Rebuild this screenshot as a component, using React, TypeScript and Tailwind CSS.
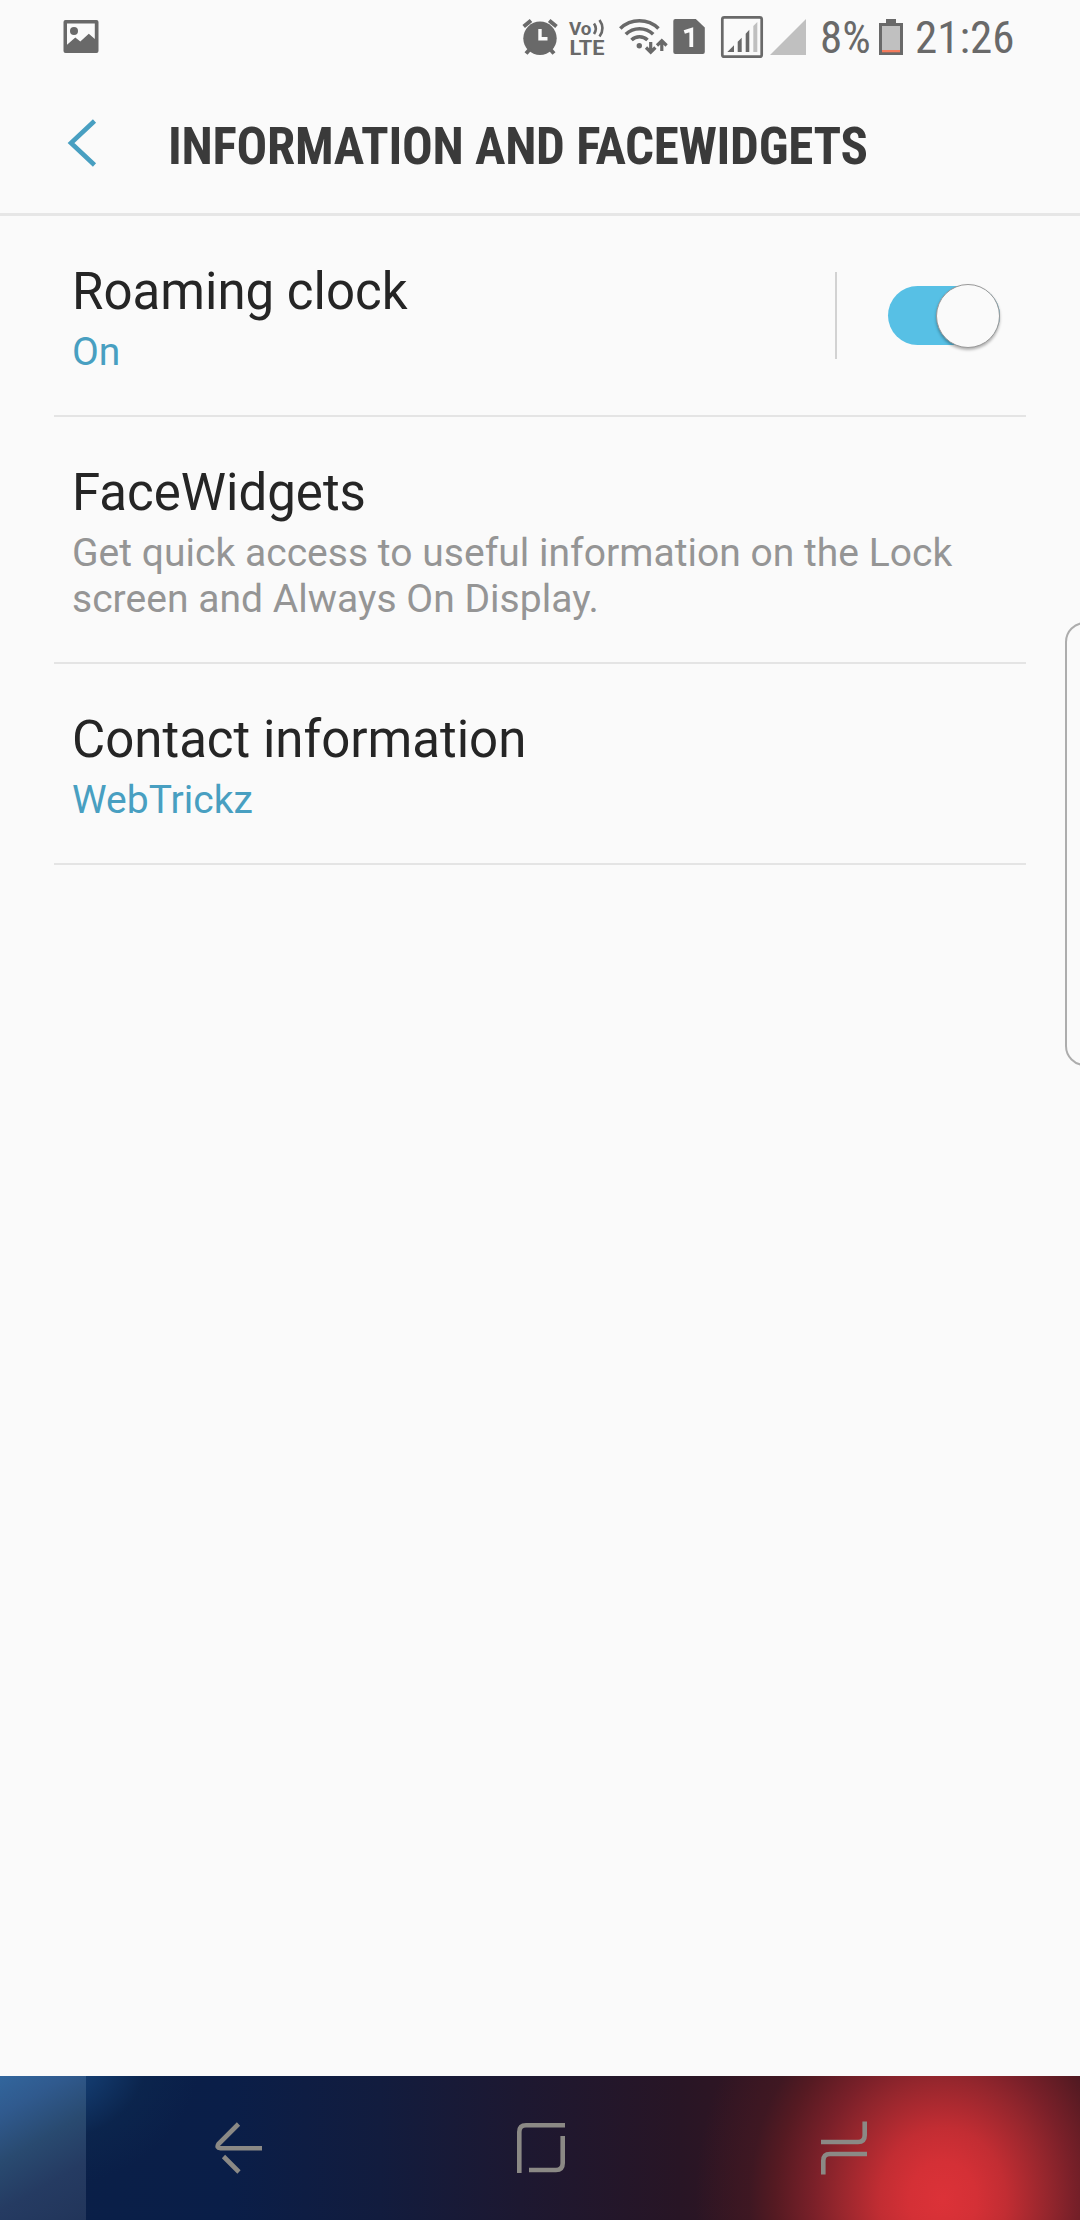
import React, { useState } from 'react';

interface SettingRow {
  title: string;
  summary: string;
  active?: boolean;
  hasSwitch?: boolean;
}

const rows: SettingRow[] = [
  { title: 'Roaming clock', summary: 'On', active: true, hasSwitch: true },
  { title: 'FaceWidgets', summary: 'Get quick access to useful information on the Lock screen and Always On Display.' },
  { title: 'Contact information', summary: 'WebTrickz', active: true },
];

// Every status icon shares the height of the bar, so the viewBoxes line up side by side.
const StatusIcons: React.FC = () => (
  <>
    <svg className="h-[74px] w-[46px]" viewBox="520 0 46 74" fill="#696969">
      <circle cx="540" cy="38.3" r="16.7" />
      <path d="M523.7 26.5l7.3-6M556.5 26.5l-7.3-6" stroke="#696969" strokeWidth="4" />
      <path d="M530.5 48.5l-4.5 5M549.5 48.5l4.5 5" stroke="#696969" strokeWidth="4" />
      <path d="M540 29v9.7h7.5" stroke="#fafafa" strokeWidth="3.4" fill="none" />
    </svg>
    <svg className="h-[74px] w-[48px]" viewBox="566 0 48 74" fill="#696969">
      <text x="569" y="34.5" fontSize="18.5" fontWeight="700" fontFamily="Roboto, sans-serif" textLength="22.5" lengthAdjust="spacingAndGlyphs">Vo</text>
      <path d="M594 23.5q3.6 5 0 10.5M599.5 20q6 8.5 0 16.5" stroke="#696969" strokeWidth="2.6" fill="none" />
      <text x="569.5" y="54.7" fontSize="20.5" fontWeight="700" fontFamily="Roboto, sans-serif" textLength="35" lengthAdjust="spacingAndGlyphs">LTE</text>
    </svg>
    <svg className="h-[74px] w-[56px]" viewBox="614 0 56 74" fill="none" stroke="#696969" strokeWidth="3.6">
      <path d="M620.3 28.5a27.5 27.5 0 0 1 38.2 0M625.8 34.3a19.5 19.5 0 0 1 27.4 0M631.5 40a11.5 11.5 0 0 1 16 0" />
      <circle cx="639.3" cy="45.7" r="2.7" fill="#696969" stroke="none" />
      <path d="M650.7 42v10M646 47.5l4.7 4.7 4.7-4.7M661.8 51V41M657 45.5l4.8-4.7 4.8 4.7" strokeWidth="3.2" />
    </svg>
    <svg className="h-[74px] w-[44px]" viewBox="670 0 44 74">
      <path d="M675.3 19h20.5l9 8.5V52a2 2 0 0 1-2 2h-27.5a2 2 0 0 1-2-2V21a2 2 0 0 1 2-2z" fill="#696969" />
      <path d="M684.3 32l7-2.2V47" stroke="#fafafa" strokeWidth="3.8" fill="none" />
    </svg>
    <svg className="h-[74px] w-[54px]" viewBox="714 0 54 74" fill="#696969">
      <rect x="722.3" y="17.3" width="39.4" height="39.4" rx="2" fill="none" stroke="#696969" strokeWidth="2.7" />
      <path d="M727.3 52l6.7-6.7V52zM737.7 41.7l4-4V52h-4zM745.7 33.7l3.6-4V52h-3.6z" />
      <path d="M753.3 26l4-4v30h-4z" fill="#c0c0c0" />
    </svg>
    <svg className="h-[74px] w-[46px]" viewBox="768 0 46 74">
      <path d="M770 55l36-36v36z" fill="#c0c0c0" />
    </svg>
  </>
);

const StatusBar: React.FC = () => (
  <div className="flex h-[74px] items-start text-[45px] leading-[76px] text-[#696969]">
    <svg className="ml-[60px] h-[74px] w-[42px]" viewBox="60 0 42 74">
      <path fillRule="evenodd" d="M65.5 20h31a2 2 0 0 1 2 2v29a2 2 0 0 1-2 2h-31a2 2 0 0 1-2-2V22a2 2 0 0 1 2-2zM67 23.5v21.3l8.3-7.3 5 4 8.5-7.8 6 5.3V23.5z" fill="#696969" />
      <circle cx="74" cy="31" r="4" fill="#696969" />
    </svg>
    <div className="ml-[418px] flex">
      <StatusIcons />
    </div>
    <span className="ml-[6px] w-[56px] whitespace-nowrap [font-family:'Roboto_Condensed',Roboto,sans-serif] [font-stretch:75%]">8%</span>
    <svg className="h-[74px] w-[32px]" viewBox="876 0 32 74">
      <path d="M886 19h10v4h7v32h-24V23h7z" fill="#696969" />
      <path d="M882 26h18v24h-18z" fill="#c0c0c0" />
      <path d="M882 50h18v2.3h-18z" fill="#f47c5d" />
    </svg>
    <span className="ml-[7px] whitespace-nowrap [font-family:'Roboto_Condensed',Roboto,sans-serif] [font-stretch:75%]">21:26</span>
  </div>
);

const Toggle: React.FC<{ on: boolean; onChange: () => void }> = ({ on, onChange }) => (
  <div className="flex h-[87px] items-center border-l-2 border-[#d2d2d2] pl-[51px]">
    <button
      role="switch"
      aria-checked={on}
      onClick={onChange}
      className={`flex h-[59px] w-[112px] items-center rounded-full ${on ? 'justify-end bg-[#57c0e5]' : 'justify-start bg-gray-300'}`}
    >
      <span className="h-16 w-16 shrink-0 rounded-full border border-[#999] bg-[#fafafa] shadow-[0_2px_3px_rgba(0,0,0,0.3)]" />
    </button>
  </div>
);

const NavBar: React.FC = () => (
  <div className="flex h-36 bg-[radial-gradient(210px_240px_at_943px_124px,#dc3238_0%,#d43036_16%,#c22d33_30%,#95262d_50%,#7a2029_62%,#551a22_80%,#421822cc_92%,#38162200_118%),radial-gradient(150px_130px_at_50px_-20px,#1a4a80_0%,#12386a_35%,#0c285099_65%,#0a204800_100%),linear-gradient(90deg,#0a2048_0px,#0a1e48_230px,#121c3e_380px,#1d1831_520px,#281525_680px,#321522_760px,#401820_1080px)]">
    <div className="h-full w-[86px] bg-[linear-gradient(150deg,#32669d_0%,#305a8e_20%,#294a70_45%,#253b62_70%,#22355a_100%)]" />
    <svg className="h-36 flex-1" viewBox="86 2076 994 144" fill="none" stroke="#8b8985" strokeWidth="4.6">
      <path d="M238.5 2124l-20 20q-2.5 4 2 4.300H262M223.500 2156.500l15.500 15.500" />
      <path d="M519.3 2173v-41q0-6.700 6.700-6.700h39M562.700 2136v27.300q0 6.700-6.700 6.700h-27" />
      <path d="M821 2142h37q6.700 0 6.700-6.700V2121.500M867 2154h-37q-6.700 0-6.700 6.700V2174.500" />
    </svg>
  </div>
);

const App: React.FC = () => {
  const [roaming, setRoaming] = useState(true);

  return (
    <div className="relative flex h-[2220px] w-[1080px] flex-col overflow-hidden bg-[#fafafa] font-[Roboto,sans-serif]">
      <StatusBar />
      <header className="flex h-[142px] items-center border-b-[3px] border-[#e6e6e6] pl-[66px]">
        <svg className="h-[142px] w-[102px]" viewBox="66 74 102 142" fill="none" stroke="#489fc1" strokeWidth="4.6">
          <path d="M94.5 122l-23.5 22 23.5 22" />
        </svg>
        <h1 className="pt-[6px] text-[51px] leading-[60px] font-bold tracking-[-0.26px] whitespace-nowrap text-[#3a3a3a] [font-family:'Roboto_Condensed',Roboto,sans-serif] [font-stretch:75%]">
          INFORMATION AND FACEWIDGETS
        </h1>
      </header>

      <main className="flex-1 px-[54px]">
        {rows.map(row => (
          <div key={row.title} className="flex justify-between border-b-2 border-[#e4e4e4] pt-[46px] pr-[26px] pb-[40px] pl-[18px]">
            <div>
              <h2 className="text-[51px] leading-[60px] text-[#252525]">{row.title}</h2>
              <p className={`mt-[7px] text-[39px] leading-[46px] tracking-[0.03px] ${row.active ? 'text-[#489fc1]' : 'text-[#959595]'}`}>
                {row.summary}
              </p>
            </div>
            {row.hasSwitch && (
              <div className="mt-[10px] h-0">
                <Toggle on={roaming} onChange={() => setRoaming(!roaming)} />
              </div>
            )}
          </div>
        ))}
      </main>

      <NavBar />

      {/* edge panel handle */}
      <div className="absolute top-[622px] -right-[10px] h-[444px] w-[25px] rounded-l-[20px] border-2 border-[#adadad]" />
    </div>
  );
};

export default App;
